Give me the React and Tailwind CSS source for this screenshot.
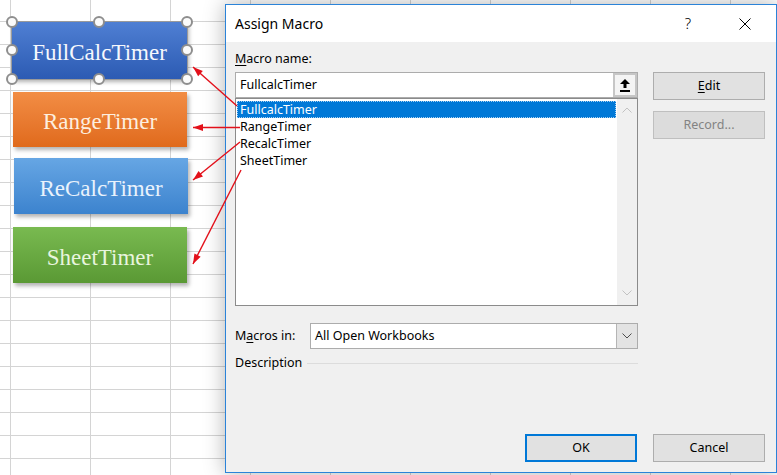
import React from "react";

const arrows = [
  [237, 106, 193, 67],
  [240, 127.5, 193, 127.5],
  [240, 142, 193, 180],
  [241, 170, 193, 264],
];

function head(x1, y1, x2, y2) {
  const dx = x2 - x1;
  const dy = y2 - y1;
  const len = Math.hypot(dx, dy);
  const ux = dx / len;
  const uy = dy / len;
  const L = 10;
  const W = 3.5;
  const bx = x2 - ux * L;
  const by = y2 - uy * L;
  const nx = -uy;
  const ny = ux;
  return `${x2},${y2} ${bx + nx * W},${by + ny * W} ${bx - nx * W},${by - ny * W}`;
}

function Handle({ className }) {
  return (
    <div
      className={`absolute w-[12px] h-[12px] rounded-full bg-[#fbfbfb] border-2 border-[#8e8e8e] ${className}`}
    />
  );
}

function UploadIcon() {
  return (
    <svg width="10" height="13" viewBox="0 0 10 13">
      <polygon points="0,5 5,0 10,5" fill="#000" />
      <rect x="3.5" y="5" width="3" height="4" fill="#000" />
      <rect x="0" y="11" width="10" height="2" fill="#000" />
    </svg>
  );
}

function Chevron({ up, color }) {
  return (
    <svg width="10" height="6" viewBox="0 0 10 6">
      <polyline
        points={up ? "0.5,5.5 5,1 9.5,5.5" : "0.5,0.5 5,5 9.5,0.5"}
        fill="none"
        stroke={color}
        strokeWidth="1"
      />
    </svg>
  );
}

export default function App() {
  return (
    <div className="relative w-[777px] h-[475px] overflow-hidden bg-white bg-[linear-gradient(to_right,#d4d4d4_1px,transparent_1px),linear-gradient(to_bottom,#d4d4d4_1px,transparent_1px)] bg-[size:80px_23px] bg-[position:10px_21px] flex">
      {/* Shapes on the sheet */}
      <div className="w-[225px] shrink-0 pl-[12px] pt-[22px] flex flex-col font-['Liberation_Serif',serif] text-[23px]">
        <div className="relative w-[175px] h-[57px] pt-[6px] outline outline-1 outline-[#9a9a9a] bg-gradient-to-b from-[#4f7fd3] to-[#2c5bb3] shadow-[2px_3px_4px_rgba(0,0,0,0.3)] flex items-center justify-center text-[#f6f8fd]">
          FullCalcTimer
          <Handle className="left-[-6px] top-[-6px]" />
          <Handle className="left-[81px] top-[-6px]" />
          <Handle className="right-[-6px] top-[-6px]" />
          <Handle className="left-[-6px] top-[22px]" />
          <Handle className="right-[-6px] top-[22px]" />
          <Handle className="left-[-6px] bottom-[-6px]" />
          <Handle className="left-[81px] bottom-[-6px]" />
          <Handle className="right-[-6px] bottom-[-6px]" />
        </div>
        <div className="mt-[13px] ml-[1px] w-[174px] h-[55px] pt-[6px] bg-gradient-to-b from-[#f28d44] to-[#e06a1b] shadow-[2px_3px_4px_rgba(0,0,0,0.3)] flex items-center justify-center text-[#fdeedf]">
          RangeTimer
        </div>
        <div className="mt-[11px] ml-[2px] w-[174px] h-[56px] pt-[6px] bg-gradient-to-b from-[#66a6e4] to-[#3c83ce] shadow-[2px_3px_4px_rgba(0,0,0,0.3)] flex items-center justify-center text-[#e9f2fc]">
          ReCalcTimer
        </div>
        <div className="mt-[13px] ml-[1px] w-[174px] h-[56px] pt-[6px] bg-gradient-to-b from-[#79ba50] to-[#5a9934] shadow-[2px_3px_4px_rgba(0,0,0,0.3)] flex items-center justify-center text-[#e8f5de]">
          SheetTimer
        </div>
      </div>

      {/* Dialog */}
      <div className="mt-[4px] w-[552px] h-[469px] shrink-0 border border-[#2b83d8] shadow-[0_0_20px_rgba(0,0,0,0.3)] flex flex-col font-['Noto_Sans',sans-serif] text-black">
        <div className="h-[37px] bg-white flex items-center pl-[9px]">
          <span className="text-[14px]">Assign Macro</span>
          <div className="ml-auto flex items-center">
            <span className="w-[30px] text-center text-[15px] font-light">?</span>
            <span className="ml-[27px] w-[30px] flex justify-center mr-[16px]">
              <svg width="12" height="12" viewBox="0 0 12 12">
                <line x1="0.5" y1="0.5" x2="11.5" y2="11.5" stroke="#000" strokeWidth="1" />
                <line x1="11.5" y1="0.5" x2="0.5" y2="11.5" stroke="#000" strokeWidth="1" />
              </svg>
            </span>
          </div>
        </div>

        <div className="flex-1 bg-[#f0f0f0] flex flex-col pl-[9px] pr-[11px] pt-[9px] pb-[10px] text-[12.5px]">
          <div className="leading-[16px] h-[16px]">
            <u className="underline-offset-2">M</u>acro name:
          </div>
          <div className="mt-[5px] flex gap-[15px]">
            <div className="w-[403px] flex flex-col">
              <div className="h-[26px] border border-[#acacac] bg-white flex items-center justify-between pl-[4px]">
                <span>FullcalcTimer</span>
                <div className="w-[24px] h-[24px] border-2 border-[#c6c6c6] bg-[#f4f4f4] flex items-center justify-center">
                  <UploadIcon />
                </div>
              </div>
              <div className="h-[208px] border border-[#8b8b8b] bg-white flex">
                <div className="flex-1 pt-[2px] px-[1px] flex flex-col leading-[16px]">
                  <div className="h-[17px] pl-[2px] bg-[#0078d7] text-white border border-dotted border-[#a6cff2]">
                    FullcalcTimer
                  </div>
                  <div className="h-[17px] pl-[3px] pt-[1px]">RangeTimer</div>
                  <div className="h-[17px] pl-[3px] pt-[1px]">RecalcTimer</div>
                  <div className="h-[17px] pl-[3px] pt-[1px]">SheetTimer</div>
                </div>
                <div className="w-[20px] bg-[#f0f0f0] flex flex-col items-center justify-between pt-[8px] pb-[9px]">
                  <Chevron up color="#c2c2c2" />
                  <Chevron color="#c2c2c2" />
                </div>
              </div>
              <div className="mt-[17px] h-[26px] flex items-center">
                <span>
                  M<u className="underline-offset-2">a</u>cros in:
                </span>
                <div className="ml-auto w-[328px] h-[26px] border border-[#acacac] bg-white flex items-center">
                  <span className="pl-[4px] flex-1">All Open Workbooks</span>
                  <div className="w-[21px] h-full bg-[#e3e3e3] border-l border-[#b5b5b5] flex items-center justify-center">
                    <Chevron color="#4d4d4d" />
                  </div>
                </div>
              </div>
              <div className="mt-[6px] h-[16px] leading-[16px] flex items-center">
                <span>Description</span>
                <div className="ml-[5px] flex-1 h-px bg-[#dcdcdc]" />
              </div>
            </div>
            <div className="w-[112px] flex flex-col gap-[11px]">
              <div className="h-[28px] border border-[#adadad] bg-[#e1e1e1] flex items-center justify-center">
                <span>
                  <u className="underline-offset-2">E</u>dit
                </span>
              </div>
              <div className="h-[28px] border border-[#bfbfbf] bg-[#dcdcdc] flex items-center justify-center text-[#838383]">
                Record...
              </div>
            </div>
          </div>
          <div className="mt-auto flex justify-end gap-[16px]">
            <div className="w-[112px] h-[28px] border-2 border-[#0078d7] bg-[#e1e1e1] flex items-center justify-center">
              OK
            </div>
            <div className="w-[112px] h-[28px] border border-[#adadad] bg-[#e1e1e1] flex items-center justify-center">
              Cancel
            </div>
          </div>
        </div>
      </div>

      {/* Red annotation arrows */}
      <svg
        className="absolute left-0 top-0 pointer-events-none"
        width="777"
        height="475"
        viewBox="0 0 777 475"
      >
        {arrows.map(([x1, y1, x2, y2], i) => (
          <g key={i}>
            <line x1={x1} y1={y1} x2={x2} y2={y2} stroke="#e3101a" strokeWidth="1.4" />
            <polygon points={head(x1, y1, x2, y2)} fill="#e3101a" />
          </g>
        ))}
      </svg>
    </div>
  );
}
